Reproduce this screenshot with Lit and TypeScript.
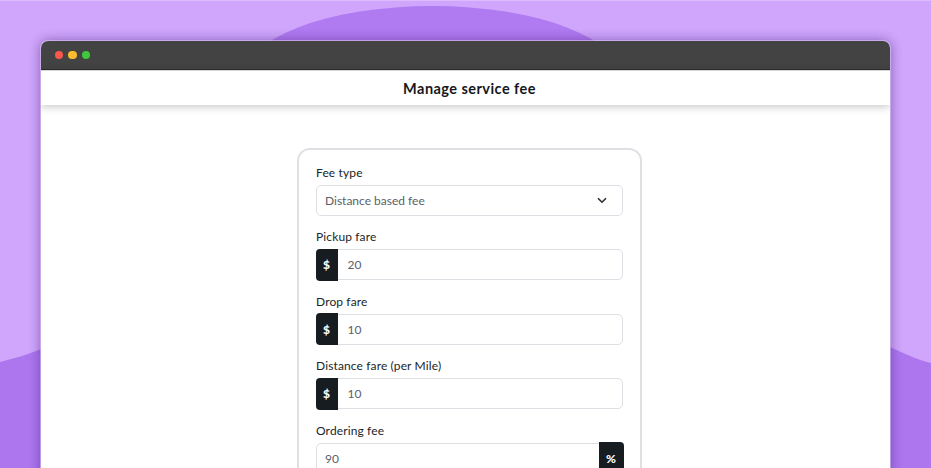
import { LitElement, html, css, svg } from "lit";
import { customElement } from "lit/decorators.js";

interface Field { label: string; value: string; addon: string; side: "start" | "end"; }
const fields: Field[] = [
  { label: "Pickup fare", value: "20", addon: "$", side: "start" },
  { label: "Drop fare", value: "10", addon: "$", side: "start" },
  { label: "Distance fare (per Mile)", value: "10", addon: "$", side: "start" },
  { label: "Ordering fee", value: "90", addon: "%", side: "end" },
];

@customElement("app-root")
export class AppRoot extends LitElement {
  static styles = css`
    :host { display: block; position: relative; width: 931px; height: 468px; overflow: hidden; background: #cfa6fb; font-family: "Lato", "Noto Sans", sans-serif; color: #212529; }
    .bg { position: absolute; inset: 0; width: 931px; height: 468px; }
    .page { position: relative; padding: 41px 41px 0; }
    .window { height: 500px; background: #fff; border-radius: 7px 7px 0 0; box-shadow: 0 0 0 1px rgba(225, 205, 250, .55), -1px 0 12px rgba(70, 30, 120, .3), 1px 0 12px rgba(70, 30, 120, .3); overflow: hidden; }
    .bar { height: 28px; background: #434343; border-bottom: 1px solid #2f2f2f; display: flex; align-items: center; gap: 5px; padding-left: 13.5px; }
    .dot { width: 8.5px; height: 8.5px; border-radius: 50%; }
    .r { background: #f9594d; } .y { background: #fdbb30; } .g { background: #3fc93d; }
    .head { height: 35px; padding-left: 8px; display: flex; align-items: center; justify-content: center; border-top: 1px solid #d6d6d6; box-sizing: border-box; box-shadow: 0 2px 8px rgba(0,0,0,.22); font-size: 14.5px; font-weight: 700; letter-spacing: .45px; color: #16181b; position: relative; }
    .main { display: flex; justify-content: center; padding: 43px 0 0 8px; }
    .card { width: 345px; box-sizing: border-box; border: 2px solid #dfe0e4; border-radius: 13px; padding: 14px 17px 0; display: flex; flex-direction: column; }
    .group { height: 64.4px; display: flex; flex-direction: column; }
    .label { height: 21px; font-size: 12px; font-weight: 400; letter-spacing: .13px; color: #212529; line-height: 17px; }
    .ctl { height: 31px; box-sizing: border-box; display: flex; align-items: stretch; border: 1.5px solid #dcdfe3; border-radius: 5px; font-size: 12px; letter-spacing: 0; color: #5b6167; }
    .select { align-items: center; justify-content: space-between; padding: 0 15px 0 8px; }
    .addon { width: 22px; flex: none; margin: -1.5px; background: #171c20; color: #fff; font-weight: 900; font-size: 12px; display: flex; align-items: center; justify-content: center; }
    .addon.start { border-radius: 4px 0 0 4px; margin-right: 0; }
    .addon.end { border-radius: 0 4px 4px 0; margin-left: 0; width: 25px; }
    .val { flex: 1; display: flex; align-items: center; padding-left: 8px; }
    .start + .val { padding-left: 10px; }
    .chev { width: 10px; height: 7px; display: block; }
  `;

  private bg() {
    return svg`<svg class="bg" viewBox="0 0 931 468">
      <rect x="0" y="0" width="931" height="1" fill="#dcbcfd"/>
      <ellipse cx="432.5" cy="79.3" rx="190" ry="73.3" fill="#b07af0"/>
      <path d="M0 362 C15 358 30 354 41 349 L890 347 C905 354 918 360 931 363 L931 468 L0 468 Z" fill="#ad76ee"/>
    </svg>`;
  }

  private field(f: Field) {
    const addon = html`<div class="addon ${f.side}">${f.addon}</div>`;
    const val = html`<div class="val">${f.value}</div>`;
    return html`<div class="group">
      <div class="label">${f.label}</div>
      <div class="ctl">${f.side === "start" ? html`${addon}${val}` : html`${val}${addon}`}</div>
    </div>`;
  }

  render() {
    return html`${this.bg()}
      <div class="page"><div class="window">
        <div class="bar"><span class="dot r"></span><span class="dot y"></span><span class="dot g"></span></div>
        <div class="head">Manage service fee</div>
        <div class="main"><div class="card">
          <div class="group">
            <div class="label">Fee type</div>
            <div class="ctl select"><span>Distance based fee</span>
              <svg class="chev" viewBox="0 0 10 7"><path d="M1 1.2 L5 5.2 L9 1.2" fill="none" stroke="#2b2f33" stroke-width="1.6"/></svg>
            </div>
          </div>
          ${fields.map((f) => this.field(f))}
        </div></div>
      </div></div>`;
  }
}
